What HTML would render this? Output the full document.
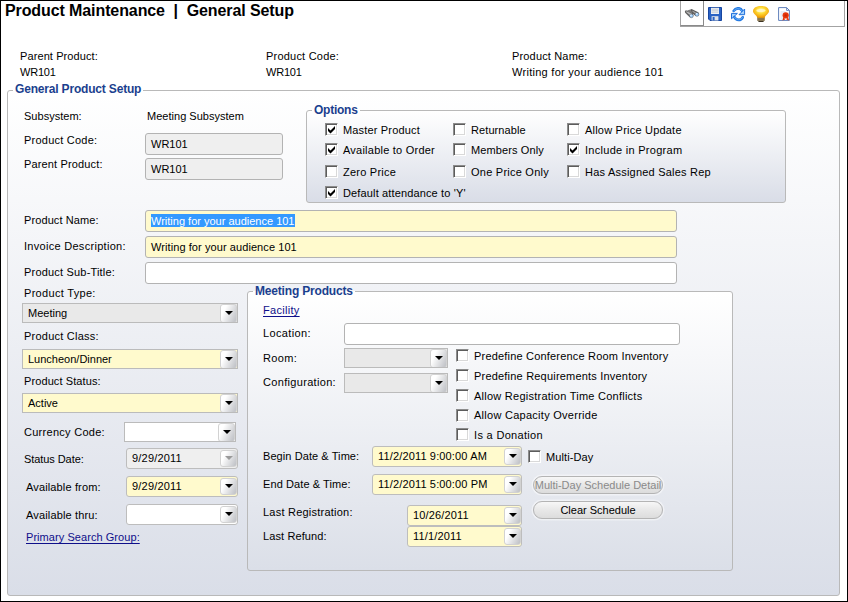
<!DOCTYPE html>
<html>
<head>
<meta charset="utf-8">
<title>Product Maintenance | General Setup</title>
<style>
html,body{margin:0;padding:0;background:#fff;}
body{width:848px;height:602px;position:relative;overflow:hidden;font-family:"Liberation Sans",sans-serif;}
#frame{position:absolute;left:0;top:0;width:846px;height:600px;border:1px solid #000;z-index:50;pointer-events:none;}
.a{position:absolute;white-space:nowrap;}
.t{position:absolute;white-space:nowrap;font:11px/13px "Liberation Sans",sans-serif;color:#000;}
.v{position:absolute;white-space:nowrap;font:11px/13px "Liberation Sans",sans-serif;color:#000;}
.title{position:absolute;left:5px;top:1px;letter-spacing:-0.1px;font:bold 16px/20px "Liberation Sans",sans-serif;color:#000;white-space:nowrap;}
.gb{position:absolute;border:1px solid #b9b9b9;border-radius:3px;box-sizing:border-box;}
.lg{position:absolute;white-space:nowrap;font:bold 12px/14px "Liberation Sans",sans-serif;color:#1b3f8e;padding:0 2px;letter-spacing:-0.18px;}
.in{position:absolute;box-sizing:border-box;border:1px solid #b3b3b3;border-radius:3px;background:#fff;font:11px/22px "Liberation Sans",sans-serif;color:#000;white-space:nowrap;overflow:hidden;padding-left:5px;}
.y{background:#fffacd;}
.g{background:#efefef;}
.g.cx{background:#e9e9e9;}
.cx{border-radius:0;border-color:#bbbbbb;}
.dt{border-color:#bdbdbd;}
.dd{position:absolute;right:0;top:0;bottom:-1px;width:17px;box-sizing:border-box;border:1px solid #d2d2d2;border-radius:3px;background:linear-gradient(115deg,#ffffff 25%,#bdbfc4 100%);}
.dt .dd{top:1px;bottom:1px;}
.dd:after{content:"";position:absolute;left:3.5px;top:6px;border-left:4px solid transparent;border-right:4px solid transparent;border-top:4.5px solid #000;}
.dt .dd:after{top:5px;}
.dd.dis:after{border-top-color:#9a9a9a;}
.cb{position:absolute;width:13px;height:13px;box-sizing:border-box;background:#fff;border:1px solid;border-color:#8c8c8c #fff #fff #8c8c8c;box-shadow:inset 1px 1px 0 #5c5c5c, inset -1px -1px 0 #d9d9d9;}
.cb svg{position:absolute;left:-1px;top:-1px;}
.btn{position:absolute;box-sizing:border-box;border:1px solid #b4b4b4;border-radius:9px;background:linear-gradient(#f7f7f7,#e9e9e9 45%,#dcdcdc);font:11px/16px "Liberation Sans",sans-serif;text-align:center;white-space:nowrap;overflow:hidden;color:#000;box-shadow:0 0 0 1.500px rgba(255,255,255,0.45);}
.lnk{position:absolute;white-space:nowrap;font:11px/13px "Liberation Sans",sans-serif;color:#0f0f8a;text-decoration:underline;text-underline-offset:2px;text-decoration-thickness:1px;}
</style>
</head>
<body>
<div id="frame"></div>

<div class="title">Product Maintenance&nbsp; |&nbsp; General Setup</div>

<!-- toolbar -->
<div class="a" id="tb" style="left:680px;top:0;width:165px;height:27px;border:1px solid #a3a3a3;border-top:none;box-sizing:border-box;background:#fff;"></div>
<div class="a" id="tb1" style="left:680px;top:0;width:24px;height:26px;border:1px solid #8a8a8a;border-top:none;border-left-color:#a3a3a3;box-sizing:border-box;background:#fff;"></div>
<svg class="a" style="left:684px;top:8px;" width="16" height="11" viewBox="0 0 16 11">
  <path d="M3.000 2.600 L6.400 1.500 L8.200 4.800 L6.000 4.200 Z" fill="#7d7d7d"/>
  <path d="M6.400 1.500 L7.600 1.000 L14.300 4.200 L14.900 6.600 L11.400 7.700 L7.600 4.600 Z" fill="#5a5a5a"/>
  <path d="M8.200 2.500 L13.200 4.900 L11.600 5.900 L8.600 3.800 Z" fill="#a3a3a3"/>
  <path d="M0.900 3.000 L2.000 2.300 L8.800 4.900 L9.500 7.600 L5.700 9.200 L1.100 4.700 Z" fill="#626262"/>
  <path d="M2.000 3.200 L8.000 5.500 L6.000 7.300 L2.200 4.000 Z" fill="#bdbdbd"/>
  <circle cx="7.400" cy="7.800" r="1.900" fill="#9fd0ff" stroke="#4a4a4a" stroke-width="0.500"/>
  <circle cx="6.900" cy="7.200" r="0.800" fill="#e8f4ff"/>
  <circle cx="13.000" cy="6.400" r="1.900" fill="#9fd0ff" stroke="#4a4a4a" stroke-width="0.500"/>
  <circle cx="12.500" cy="5.800" r="0.800" fill="#e8f4ff"/>
</svg>
<svg class="a" style="left:708px;top:7px;" width="14" height="14" viewBox="0 0 14 14">
  <path d="M0.5 0.5 H13.5 V13.5 H2 L0.5 12 Z" fill="#2a62c4" stroke="#1746a0" stroke-width="1"/>
  <rect x="3" y="0.8" width="8" height="6.2" fill="#eef1f5"/>
  <path d="M3.6 2.2 H10.4 M3.6 3.7 H10.4 M3.6 5.2 H10.4" stroke="#b9bec8" stroke-width="0.7"/>
  <rect x="3.6" y="9.2" width="6.8" height="4.3" fill="#dfe3ea"/>
  <rect x="4.6" y="10" width="2" height="3.5" fill="#2a62c4"/>
</svg>
<svg class="a" style="left:731px;top:7px;" width="15" height="15" viewBox="0 0 15 15">
  <path d="M2.700 3.900 Q4.300 1.300 7.400 1.300 Q10.000 1.300 11.200 4.000" fill="none" stroke="#2278e2" stroke-width="2.700" stroke-linecap="round"/>
  <path d="M2.900 3.700 Q4.500 1.500 7.400 1.500 Q9.800 1.500 11.000 3.900" fill="none" stroke="#62aaf5" stroke-width="1.000" stroke-linecap="round"/>
  <path d="M13.600 2.000 V7.700 H8.000 Z" fill="#a6d2fc" stroke="#1f6fdc" stroke-width="1.000" stroke-linejoin="round"/>
  <path d="M0.500 6.400 H6.400 L0.500 11.800 Z" fill="#a6d2fc" stroke="#1f6fdc" stroke-width="1.000" stroke-linejoin="round"/>
  <path d="M3.400 10.200 Q4.800 12.900 7.600 12.900 Q10.400 12.900 11.700 10.300" fill="none" stroke="#2278e2" stroke-width="2.700" stroke-linecap="round"/>
  <path d="M3.600 10.300 Q5.000 12.700 7.600 12.700 Q10.200 12.700 11.500 10.400" fill="none" stroke="#62aaf5" stroke-width="1.000" stroke-linecap="round"/>
</svg>
<svg class="a" style="left:752px;top:5px;" width="18" height="18" viewBox="0 0 18 18">
  <defs><radialGradient id="bg1" cx="50%" cy="38%" r="62%"><stop offset="0" stop-color="#fffbe0"/><stop offset="0.40" stop-color="#ffe03a"/><stop offset="1" stop-color="#f09600"/></radialGradient></defs>
  <path d="M9 1 C14.5 1 17 3.6 17 6.2 C17 8.6 14 9.8 12.4 12.6 H5.6 C4 9.800 1 8.600 1 6.200 C1 3.600 3.500 1 9 1 Z" fill="url(#bg1)"/>
  <ellipse cx="9" cy="5.400" rx="4.600" ry="1.500" fill="#fff6c8" opacity="0.9"/>
  <rect x="5.300" y="12.200" width="7.400" height="3.600" fill="#6e5a34"/>
  <path d="M5.300 12.600 H12.700" stroke="#f2a000" stroke-width="0.9"/><path d="M5.300 13.900 H12.700 M5.300 15.200 H12.700" stroke="#b9a678" stroke-width="0.6"/>
  <rect x="6.400" y="15.800" width="5.200" height="1.200" fill="#3c3220"/>
</svg>
<svg class="a" style="left:778px;top:7px;" width="13" height="14" viewBox="0 0 13 14">
  <path d="M0.6 0.6 H8.600 L11.4 3.400 V13.400 H0.6 Z" fill="#ffffff" stroke="#5f7fba" stroke-width="1"/>
  <path d="M8.600 0.6 V3.400 H11.4" fill="none" stroke="#5f7fba" stroke-width="0.9"/>
  <path d="M2.400 5 H7.500 M2.400 7 H5.500 M2.400 9 H5 M2.400 11 H5" stroke="#c5cfe4" stroke-width="0.8"/>
  <circle cx="7.700" cy="8.400" r="3.100" fill="#e83408"/>
  <path d="M5.400 10.000 L4.400 13.600 L7.200 12.400 Z M10.000 10.000 L11.200 13.600 L8.300 12.400 Z" fill="#e83408"/>
  <circle cx="7.700" cy="8.400" r="1.200" fill="#c42a06"/>
</svg>

<!-- header info -->
<div class="t" style="left:20px;top:50px;letter-spacing:0.10px;">Parent Product:</div>
<div class="t" style="left:20px;top:66px;letter-spacing:-0.20px;">WR101</div>
<div class="t" style="left:266px;top:50px;letter-spacing:0.21px;">Product Code:</div>
<div class="t" style="left:266px;top:66px;letter-spacing:-0.20px;">WR101</div>
<div class="t" style="left:512px;top:50px;letter-spacing:0.16px;">Product Name:</div>
<div class="t" style="left:512px;top:66px;letter-spacing:0.28px;">Writing for your audience 101</div>

<!-- main group box -->
<div class="gb" id="gmain" style="left:7px;top:90px;width:833px;height:506px;background:linear-gradient(#ffffff,#dadee8);"></div>
<div class="lg" style="left:13px;top:82px;background:#fff;">General Product Setup</div>

<!-- left column top -->
<div class="t" style="left:24px;top:110px;letter-spacing:0.02px;">Subsystem:</div>
<div class="t" style="left:147px;top:110px;letter-spacing:0.02px;">Meeting Subsystem</div>
<div class="t" style="left:24px;top:134px;letter-spacing:0.23px;">Product Code:</div>
<div class="in g" style="left:145px;top:133px;width:138px;height:22px;line-height:21px;">WR101</div>
<div class="t" style="left:24px;top:158px;letter-spacing:0.15px;">Parent Product:</div>
<div class="in g" style="left:145px;top:158px;width:138px;height:22px;line-height:21px;">WR101</div>

<!-- options group -->
<div class="gb" id="gopt" style="left:306px;top:110px;width:480px;height:93px;background:linear-gradient(#ffffff,#d9dde7);"></div>
<div class="lg" style="left:312px;top:103px;background:#fefefe;letter-spacing:-0.25px;">Options</div>

<div class="cb" style="left:325px;top:123px;"><svg width="13" height="13" viewBox="0 0 13 13"><path d="M3 5 L5.500 7.500 L10 3 V6 L5.500 10.500 L3 8 Z" fill="#000"/></svg></div>
<div class="t" style="left:343px;top:124px;letter-spacing:0.17px;">Master Product</div>
<div class="cb" style="left:325px;top:143px;"><svg width="13" height="13" viewBox="0 0 13 13"><path d="M3 5 L5.500 7.500 L10 3 V6 L5.500 10.500 L3 8 Z" fill="#000"/></svg></div>
<div class="t" style="left:343px;top:144px;letter-spacing:0.23px;">Available to Order</div>
<div class="cb" style="left:325px;top:165px;"></div>
<div class="t" style="left:343px;top:166px;letter-spacing:0.23px;">Zero Price</div>
<div class="cb" style="left:325px;top:186px;"><svg width="13" height="13" viewBox="0 0 13 13"><path d="M3 5 L5.500 7.500 L10 3 V6 L5.500 10.500 L3 8 Z" fill="#000"/></svg></div>
<div class="t" style="left:343px;top:187px;letter-spacing:0.14px;">Default attendance to 'Y'</div>

<div class="cb" style="left:453px;top:123px;"></div>
<div class="t" style="left:471px;top:124px;letter-spacing:0.09px;">Returnable</div>
<div class="cb" style="left:453px;top:143px;"></div>
<div class="t" style="left:471px;top:144px;letter-spacing:0.12px;">Members Only</div>
<div class="cb" style="left:453px;top:165px;"></div>
<div class="t" style="left:471px;top:166px;letter-spacing:0.24px;">One Price Only</div>

<div class="cb" style="left:567px;top:123px;"></div>
<div class="t" style="left:585px;top:124px;letter-spacing:0.21px;">Allow Price Update</div>
<div class="cb" style="left:567px;top:143px;"><svg width="13" height="13" viewBox="0 0 13 13"><path d="M3 5 L5.500 7.500 L10 3 V6 L5.500 10.500 L3 8 Z" fill="#000"/></svg></div>
<div class="t" style="left:585px;top:144px;letter-spacing:0.28px;">Include in Program</div>
<div class="cb" style="left:567px;top:165px;"></div>
<div class="t" style="left:585px;top:166px;letter-spacing:0.22px;">Has Assigned Sales Rep</div>

<!-- name rows -->
<div class="t" style="left:24px;top:214px;letter-spacing:0.10px;">Product Name:</div>
<div class="in y" style="left:145px;top:210px;width:532px;height:22px;line-height:21px;"><div style="position:absolute;left:5px;top:3px;width:144px;height:13px;background:#3399ff;"></div><span style="position:relative;color:#fff;">Writing for your audience 101</span></div>
<div class="t" style="left:24px;top:240px;letter-spacing:0.29px;">Invoice Description:</div>
<div class="in y" style="left:145px;top:236px;width:532px;height:22px;line-height:21px;letter-spacing:0.08px;">Writing for your audience 101</div>
<div class="t" style="left:24px;top:266px;letter-spacing:0.19px;">Product Sub-Title:</div>
<div class="in" style="left:145px;top:262px;width:532px;height:22px;line-height:21px;"></div>

<!-- left column lower -->
<div class="t" style="left:24px;top:287px;letter-spacing:0.31px;">Product Type:</div>
<div class="in g cx" style="left:22px;top:303px;width:216px;height:20px;padding-left:5px;line-height:19px;">Meeting<div class="dd"></div></div>
<div class="t" style="left:24px;top:330px;letter-spacing:0.23px;">Product Class:</div>
<div class="in y cx" style="left:22px;top:349px;width:216px;height:20px;padding-left:5px;line-height:19px;">Luncheon/Dinner<div class="dd"></div></div>
<div class="t" style="left:24px;top:375px;letter-spacing:0.10px;">Product Status:</div>
<div class="in y cx" style="left:22px;top:393px;width:216px;height:20px;padding-left:5px;line-height:19px;">Active<div class="dd"></div></div>
<div class="t" style="left:24px;top:426px;letter-spacing:0.28px;">Currency Code:</div>
<div class="in cx" style="left:124px;top:422px;width:112px;height:20px;line-height:19px;"><div class="dd"></div></div>
<div class="t" style="left:24px;top:453px;letter-spacing:-0.07px;">Status Date:</div>
<div class="in g dt" style="left:126px;top:448px;width:112px;height:21px;padding-left:5px;line-height:18px;letter-spacing:0.2px;">9/29/2011<div class="dd dis"></div></div>
<div class="t" style="left:26px;top:481px;letter-spacing:0.14px;">Available from:</div>
<div class="in y dt" style="left:126px;top:476px;width:112px;height:21px;padding-left:5px;line-height:18px;letter-spacing:0.2px;">9/29/2011<div class="dd"></div></div>
<div class="t" style="left:26px;top:509px;letter-spacing:0.15px;">Available thru:</div>
<div class="in dt" style="left:126px;top:504px;width:112px;height:21px;line-height:20px;"><div class="dd"></div></div>
<div class="lnk" style="left:26px;top:531px;letter-spacing:0.06px;">Primary Search Group:</div>

<!-- meeting products group -->
<div class="gb" id="gmeet" style="left:247px;top:291px;width:486px;height:280px;background:linear-gradient(#ffffff,#dbdfe8);"></div>
<div class="lg" style="left:253px;top:284px;background:linear-gradient(#f0f2f6 0,#f0f2f6 7px,#ffffff 7px,#fefefe 14px);">Meeting Products</div>
<div class="lnk" style="left:263px;top:304px;letter-spacing:0.3px;">Facility</div>
<div class="t" style="left:263px;top:327px;letter-spacing:0.37px;">Location:</div>
<div class="in" style="left:344px;top:323px;width:336px;height:22px;line-height:21px;"></div>
<div class="t" style="left:263px;top:352px;letter-spacing:0.38px;">Room:</div>
<div class="in g cx" style="left:344px;top:348px;width:104px;height:20px;line-height:19px;"><div class="dd"></div></div>
<div class="t" style="left:263px;top:376px;letter-spacing:0.32px;">Configuration:</div>
<div class="in g cx" style="left:344px;top:373px;width:104px;height:20px;line-height:19px;"><div class="dd"></div></div>

<div class="cb" style="left:456px;top:349px;"></div>
<div class="t" style="left:474px;top:350px;letter-spacing:0.19px;">Predefine Conference Room Inventory</div>
<div class="cb" style="left:456px;top:369px;"></div>
<div class="t" style="left:474px;top:370px;letter-spacing:0.20px;">Predefine Requirements Inventory</div>
<div class="cb" style="left:456px;top:389px;"></div>
<div class="t" style="left:474px;top:390px;letter-spacing:0.25px;">Allow Registration Time Conflicts</div>
<div class="cb" style="left:456px;top:409px;"></div>
<div class="t" style="left:474px;top:409px;letter-spacing:0.27px;">Allow Capacity Override</div>
<div class="cb" style="left:456px;top:428px;"></div>
<div class="t" style="left:474px;top:429px;letter-spacing:0.32px;">Is a Donation</div>

<div class="t" style="left:263px;top:450px;letter-spacing:0.08px;">Begin Date &amp; Time:</div>
<div class="in y dt" style="left:372px;top:446px;width:150px;height:21px;padding-left:5px;line-height:19px;letter-spacing:0.15px;">11/2/2011 9:00:00 AM<div class="dd"></div></div>
<div class="cb" style="left:528px;top:450px;"></div>
<div class="t" style="left:546px;top:451px;letter-spacing:0.09px;">Multi-Day</div>
<div class="t" style="left:263px;top:478px;letter-spacing:0.09px;">End Date &amp; Time:</div>
<div class="in y dt" style="left:372px;top:474px;width:150px;height:21px;padding-left:5px;line-height:19px;letter-spacing:0.15px;">11/2/2011 5:00:00 PM<div class="dd"></div></div>
<div class="btn" style="left:533px;top:476px;width:130px;height:18px;color:#8a8a8a;">Multi-Day Schedule Detail</div>
<div class="btn" style="left:533px;top:501px;width:130px;height:18px;">Clear Schedule</div>
<div class="t" style="left:263px;top:506px;letter-spacing:0.23px;">Last Registration:</div>
<div class="in y dt" style="left:407px;top:505px;width:115px;height:21px;padding-left:5px;line-height:18px;letter-spacing:0.15px;">10/26/2011<div class="dd"></div></div>
<div class="t" style="left:263px;top:530px;letter-spacing:0.11px;">Last Refund:</div>
<div class="in y dt" style="left:407px;top:526px;width:115px;height:21px;padding-left:5px;line-height:19px;letter-spacing:0.15px;">11/1/2011<div class="dd"></div></div>

</body>
</html>
